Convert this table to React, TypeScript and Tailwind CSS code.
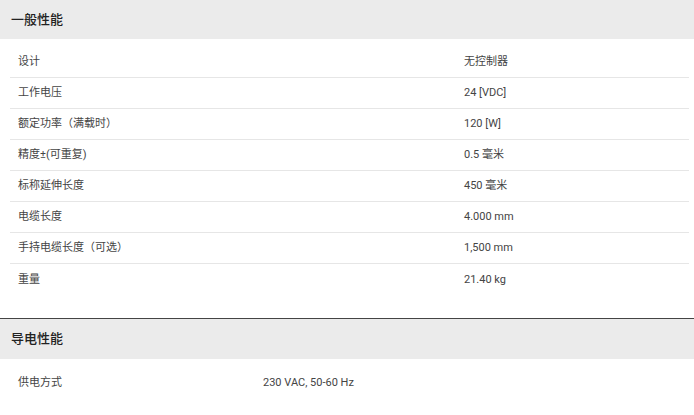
import React from "react";

const rows1: [string, string][] = [
  ["设计", "无控制器"],
  ["工作电压", "24 [VDC]"],
  ["额定功率（满载时）", "120 [W]"],
  ["精度±(可重复)", "0.5 毫米"],
  ["标称延伸长度", "450 毫米"],
  ["电缆长度", "4.000 mm"],
  ["手持电缆长度（可选）", "1,500 mm"],
  ["重量", "21.40 kg"],
];

const font = {
  fontFamily: 'Roboto, "Noto Sans CJK SC", sans-serif',
};

export default function App() {
  return (
    <div className="w-[694px] h-[415px] overflow-hidden bg-white text-[#444]" style={font}>
      <div className="h-[39px] bg-[#ebebeb] flex items-center pl-[11px]">
        <span className="text-[13px] font-medium text-[#222]">一般性能</span>
      </div>
      <div className="pt-[8px] pl-[10px] pr-[5px] pb-[23px]">
        {rows1.map(([k, v], i) => (
          <div
            key={k}
            className={`flex h-[31px] items-center text-[11px] pt-[1px] ${
              i < rows1.length - 1 ? "border-b border-[#e6e6e6]" : ""
            }`}
          >
            <div className="w-[454px] pl-[8px]">{k}</div>
            <div className="flex-1">{v}</div>
          </div>
        ))}
      </div>
      <div className="border-t border-[#444] h-[41px] bg-[#ebebeb] flex items-center pl-[11px]">
        <span className="text-[13px] font-medium text-[#222]">导电性能</span>
      </div>
      <div className="pt-[8px] pl-[10px] pr-[5px]">
        <div className="flex h-[31px] items-center text-[11px] pt-[1px]">
          <div className="w-[253px] pl-[8px]">供电方式</div>
          <div className="flex-1">230 VAC, 50-60 Hz</div>
        </div>
      </div>
    </div>
  );
}
